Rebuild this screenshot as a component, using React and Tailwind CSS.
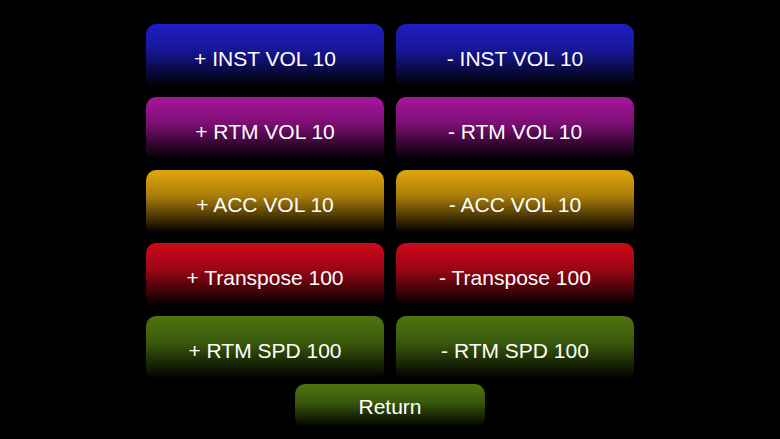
import React from 'react';

const rows = [
  { label: 'INST VOL 10', bg: 'bg-[linear-gradient(to_bottom,#1e1ec4_0%,#161696_40%,#000000_95%)]' },
  { label: 'RTM VOL 10', bg: 'bg-[linear-gradient(to_bottom,#a8169e_0%,#7c0e74_40%,#000000_95%)]' },
  { label: 'ACC VOL 10', bg: 'bg-[linear-gradient(to_bottom,#e0a80e_0%,#a87c0a_40%,#000000_95%)]' },
  { label: 'Transpose 100', bg: 'bg-[linear-gradient(to_bottom,#d0081a_0%,#9a0614_40%,#000000_95%)]' },
  { label: 'RTM SPD 100', bg: 'bg-[linear-gradient(to_bottom,#4e7410_0%,#3a5a0c_40%,#000000_95%)]' },
];

function PadButton({ bg, children, className = '' }) {
  return (
    <button
      type="button"
      className={`flex items-center justify-center rounded-[10px] text-[21px] text-white ${bg} ${className}`}
      style={{ fontFamily: '"Liberation Sans", Arial, sans-serif' }}
    >
      {children}
    </button>
  );
}

export default function App() {
  return (
    <div className="flex h-[439px] w-[780px] flex-col items-center overflow-hidden bg-black pt-[24px]">
      <div className="grid w-[488px] grid-cols-2 gap-x-3 gap-y-[7px]">
        {rows.map((row) => (
          <React.Fragment key={row.label}>
            <PadButton bg={row.bg} className="h-[66px] pt-[3px]">+ {row.label}</PadButton>
            <PadButton bg={row.bg} className="h-[66px] pt-[3px]">- {row.label}</PadButton>
          </React.Fragment>
        ))}
      </div>
      <PadButton
        bg="bg-[linear-gradient(to_bottom,#4e7410_0%,#3a5a0c_40%,#000000_98%)]"
        className="mt-[2px] h-[44px] w-[190px] pt-[1px]"
      >
        Return
      </PadButton>
    </div>
  );
}
